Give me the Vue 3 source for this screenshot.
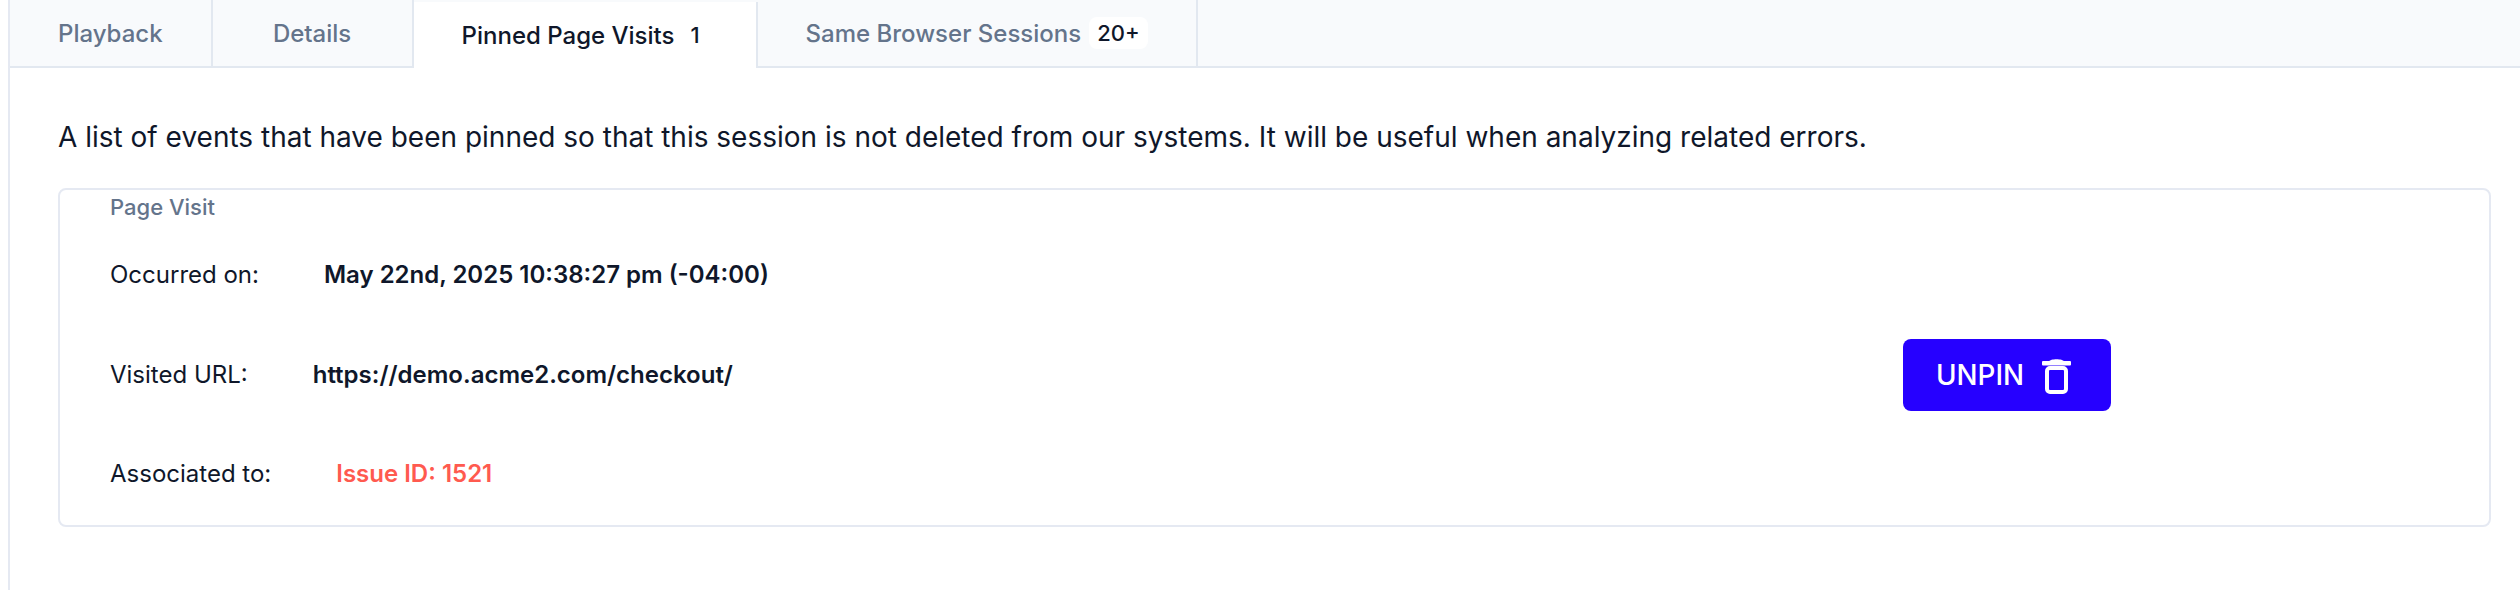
<script setup>
const tabs = [
  { label: 'Playback' },
  { label: 'Details' },
  { label: 'Pinned Page Visits', count: '1', active: true },
  { label: 'Same Browser Sessions', count: '20+' }
]
const rows = [
  { label: 'Occurred on:', value: 'May 22nd, 2025 10:38:27 pm (-04:00)' },
  { label: 'Visited URL:', value: 'https://demo.acme2.com/checkout/' },
  { label: 'Associated to:', value: 'Issue ID: 1521', issue: true }
]
</script>

<template>
  <div class="page">
    <div class="tabs">
      <div v-for="tab in tabs" :key="tab.label" class="tab" :class="{ active: tab.active }">
        {{ tab.label }}
        <span v-if="tab.count" class="count">{{ tab.count }}</span>
      </div>
    </div>
    <div class="content">
      <p class="intro">A list of events that have been pinned so that this session is not deleted from our systems. It will be useful when analyzing related errors.</p>
      <div class="card">
        <div class="card-title">Page Visit</div>
        <div class="card-body">
          <div class="rows">
            <div v-for="row in rows" :key="row.label" class="row">
              <span class="label">{{ row.label }}</span>
              <span class="value" :class="{ issue: row.issue }">{{ row.value }}</span>
            </div>
          </div>
          <button class="unpin">
            UNPIN
            <svg width="29" height="38" viewBox="0 0 29 38">
              <path d="M7 5.500C8 2.500 21 2.500 22 5.500z" fill="#fff" />
              <rect x="0" y="5" width="29" height="4.500" rx="1" fill="#fff" />
              <rect x="5" y="12" width="19" height="24" rx="3" fill="none" stroke="#fff" stroke-width="4" />
            </svg>
          </button>
        </div>
      </div>
    </div>
  </div>
</template>

<style>
html, body {
  margin: 0;
  background: #fff;
}
</style>

<style scoped>
.page {
  margin-left: 8px;
  min-height: 590px;
  box-sizing: border-box;
  border-left: 2px solid #e5e9f2;
  font-family: Inter, "Noto Sans", sans-serif;
  color: #0f172a;
}

.tabs {
  display: flex;
  height: 68px;
  box-sizing: border-box;
  background: #f8fafc;
  border-bottom: 2px solid #e2e8f0;
}

.tab {
  display: flex;
  align-items: center;
  justify-content: center;
  gap: 8px;
  min-width: 201px;
  box-sizing: border-box;
  padding: 0 48px;
  font-size: 24px;
  font-weight: 500;
  color: #64748b;
  border-right: 2px solid #e2e8f0;
}

.tab.active {
  height: 66px;
  margin-top: 2px;
  background: #fff;
  color: #0f172a;
}

.count {
  padding: 2px 8px;
  border-radius: 8px;
  background: #fff;
  color: #0f172a;
  font-size: 22px;
  line-height: 28px;
  font-weight: 500;
}

.content {
  padding: 0 29px 0 48px;
}

.intro {
  margin: 52px 0 34px;
  font-size: 28px;
  line-height: 34px;
}

.card {
  height: 339px;
  box-sizing: border-box;
  padding: 0 50px;
  border: 2px solid #e5e9f2;
  border-radius: 8px;
}

.card-title {
  margin-top: 4px;
  font-size: 22px;
  line-height: 26px;
  color: #64748b;
  font-weight: 500;
}

.card-body {
  display: flex;
  align-items: center;
  margin-top: 40px;
}

.rows {
  display: flex;
  flex-direction: column;
  gap: 70.500px;
  width: 1793px;
}

.row {
  display: flex;
  gap: 65px;
  font-size: 24px;
  line-height: 29px;
}

.value {
  font-weight: 600;
}

.issue {
  color: #ff5a4f;
}

.unpin {
  display: flex;
  align-items: center;
  gap: 18px;
  width: 208px;
  height: 72px;
  margin-top: 2px;
  padding: 0 33px;
  border: 0;
  border-radius: 8px;
  background: #2600ff;
  color: #fff;
  font-family: inherit;
  font-size: 27.800px;
  font-weight: 550;
}
</style>
